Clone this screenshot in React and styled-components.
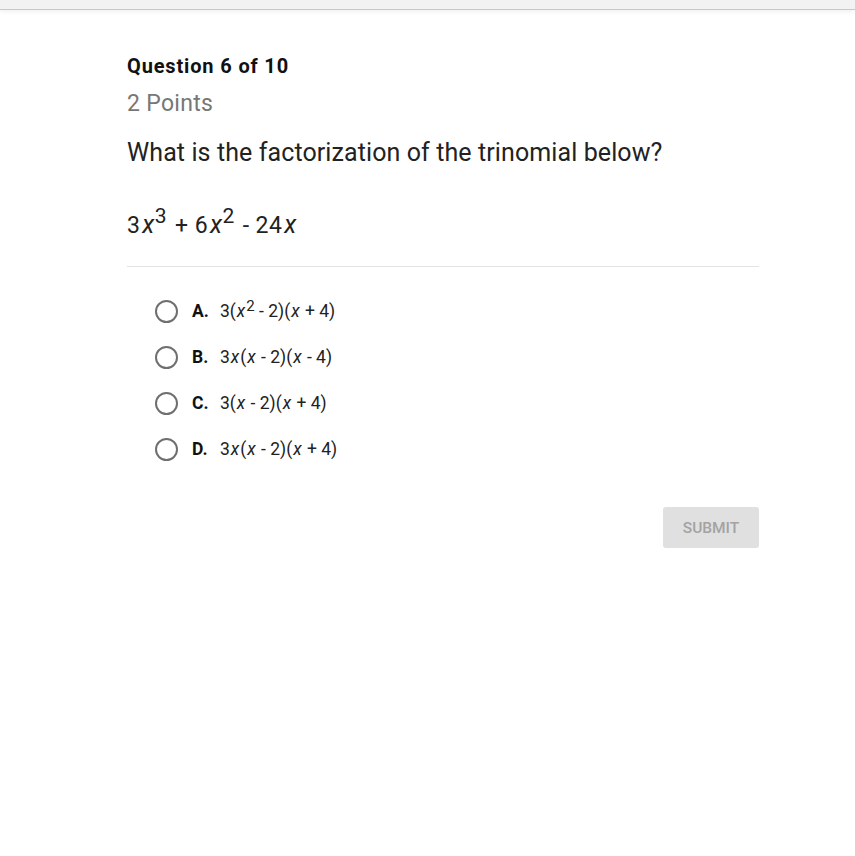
import React from "react";
import styled, { createGlobalStyle } from "styled-components";

const GlobalStyle = createGlobalStyle`
  *{
    margin:0;
    padding:0;
    box-sizing:border-box;
  }
  body{
    background:#fff;
    font-family: Roboto, "Liberation Sans", sans-serif;
    color:#222;
  }
`;

const TopBar = styled.div`
  height: 10px;
  background: #f2f2f2;
  border-bottom: 1px solid #c9c9c9;
  box-shadow: 0 2px 4px rgba(0,0,0,0.06);
`;

const Main = styled.main`
  width: 632px;
  margin-left: 127px;
  padding-top: 44px;
`;

const Count = styled.h2`
  font-size: 20px;
  font-weight: 700;
  letter-spacing: 0.85px;
  color: #111;
  line-height: 24px;
`;

const Points = styled.div`
  font-size: 23px;
  letter-spacing: 0.3px;
  color: #777;
  line-height: 26px;
  margin-top: 13px;
`;

const Prompt = styled.p`
  font-size: 25px;
  letter-spacing: 0.1px;
  color: #222;
  line-height: 30px;
  margin-top: 21px;
`;

const Equation = styled.div`
  font-size: 23px;
  letter-spacing: 0.4px;
  color: #222;
  line-height: 30px;
  margin-top: 42px;
  padding-bottom: 25px;
  border-bottom: 1px solid #e3e3e3;
  i{ font-style: italic; font-size: 25px; margin: 0 0 0 2px; }
  sup{ font-size: 21px; vertical-align: 10px; line-height: 0; margin-right: 2px; }
`;

const Options = styled.ul`
  list-style: none;
  padding: 32px 0 0 28px;
  display: flex;
  flex-direction: column;
  gap: 22px;
`;

const Option = styled.li`
  display: flex;
  align-items: center;
  height: 24px;
  font-size: 17.5px;
  color: #222;
  i{ font-style: italic; margin: 0 1px; }
  sup{ font-size: 15px; vertical-align: 6px; line-height: 0; }
`;

const Radio = styled.span`
  width: 23px;
  height: 23px;
  border-radius: 50%;
  border: 2px solid #6f6f6f;
  margin-right: 14px;
  flex-shrink: 0;
`;

const Letter = styled.b`
  font-weight: 700;
  width: 28px;
  color: #111;
`;

const Actions = styled.div`
  display: flex;
  justify-content: flex-end;
  margin-top: 46px;
`;

const Submit = styled.button`
  width: 96px;
  height: 41px;
  border: none;
  border-radius: 3px;
  background: #e0e0e0;
  color: #a3a3a3;
  font-family: Roboto, "Liberation Sans", sans-serif;
  font-size: 15.5px;
  font-weight: 500;
`;

function X() {
  return <i>x</i>;
}

export default function App() {
  return (
    <>
      <GlobalStyle />
      <TopBar />
      <Main>
        <Count>Question 6 of 10</Count>
        <Points>2 Points</Points>
        <Prompt>What is the factorization of the trinomial below?</Prompt>
        <Equation>
          3<X /><sup>3</sup> + 6<X /><sup>2</sup> - 24<X />
        </Equation>
        <Options>
          <Option>
            <Radio />
            <Letter>A.</Letter>
            <span>3(<X /><sup>2</sup> - 2)(<X /> + 4)</span>
          </Option>
          <Option>
            <Radio />
            <Letter>B.</Letter>
            <span>3<X />(<X /> - 2)(<X /> - 4)</span>
          </Option>
          <Option>
            <Radio />
            <Letter>C.</Letter>
            <span>3(<X /> - 2)(<X /> + 4)</span>
          </Option>
          <Option>
            <Radio />
            <Letter>D.</Letter>
            <span>3<X />(<X /> - 2)(<X /> + 4)</span>
          </Option>
        </Options>
        <Actions>
          <Submit>SUBMIT</Submit>
        </Actions>
      </Main>
    </>
  );
}
